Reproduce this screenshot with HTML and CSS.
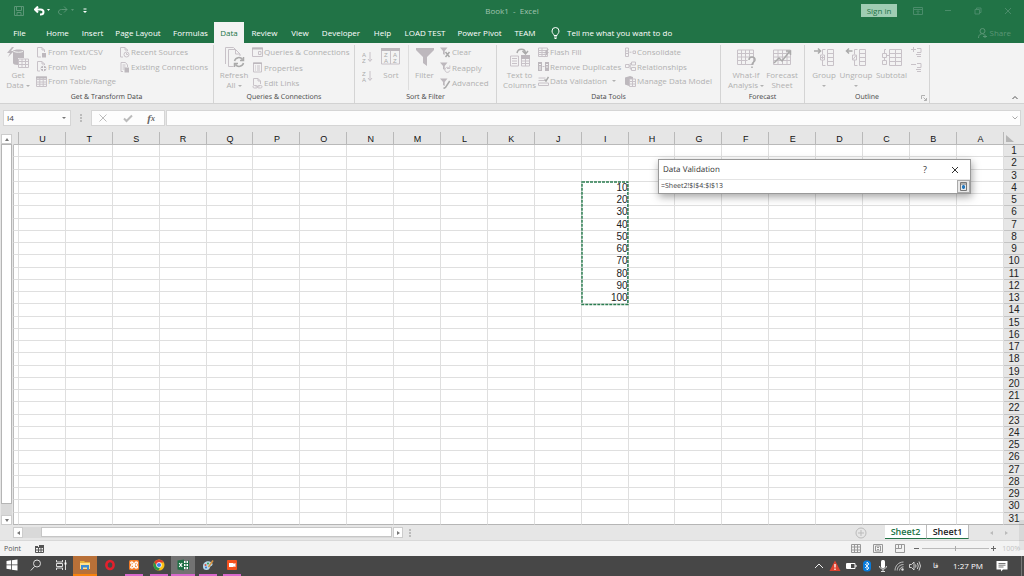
FILE: index.html
```html
<!DOCTYPE html>
<html lang="en">
<head>
<meta charset="utf-8">
<title>Book1 - Excel</title>
<link rel="stylesheet" href="styles.css">
</head>
<body>
<svg class="sprite" aria-hidden="true">
  <symbol id="i-text" viewBox="0 0 11 11"><path d="M1.500.5h4.500l2.500 2.500v2M5 10H1.500V.5M6 .5V3h2.500"/><path class="fill" d="M6 6h4v4.500H6z"/></symbol>
  <symbol id="i-web" viewBox="0 0 11 11"><path d="M1.500.5h4.500l2.500 2.500v1M4 10H1.500V.5M6 .5V3h2.500"/><circle class="fill" cx="7.500" cy="7.500" r="2.800"/><path class="cut" d="M5 7.500h5M7.500 5v5"/></symbol>
  <symbol id="i-recent" viewBox="0 0 11 11"><path d="M1.500.5h4.500l2.500 2.500v1M4 10H1.500V.5M6 .5V3h2.500"/><circle cx="7.500" cy="7.500" r="2.500"/><path d="M7.500 6v1.500h1.500"/></symbol>
  <symbol id="i-existing" viewBox="0 0 11 11"><path d="M2 .5h4.500l2 2.500v2M4 9.500H2V.5M3.500 3h3M3.500 5h3M3.500 7h2"/><path class="fill" d="M5.500 5.500h4.500v5H5.500z"/></symbol>
  <symbol id="i-table" viewBox="0 0 11 11"><path d="M.5 1h10v9.500H.5z M.5 3.500h10M.5 6h10M.5 8.200h10M3.800 2v8M7.200 2v8"/><path class="fill" d="M0 .5h11v2H0z"/></symbol>
  <symbol id="i-queries" viewBox="0 0 11 11"><path d="M.5 1h10v8.500H.5zM6.500 4.500h2.500v3H6.500z"/><path class="fill" d="M0 .5h11v2H0z"/></symbol>
  <symbol id="i-props" viewBox="0 0 11 11"><path d="M1.500 1h8v9h-8zM3 4h1M5 4h3M3 6h1M5 6h3M3 8h1M5 8h3"/><path class="fill" d="M1 .5h9v1.500H1z"/></symbol>
  <symbol id="i-links" viewBox="0 0 11 11"><path d="M1.500 7V.5h4.500L8.500 3v3M6 .5V3h2.500"/><rect x="1" y="7.500" width="4.500" height="2.500" rx="1.200"/><rect x="5.500" y="7.500" width="4.500" height="2.500" rx="1.200"/><path d="M3.500 8.800h4"/></symbol>
  <symbol id="i-fclear" viewBox="0 0 11 11"><path class="fill" d="M0 .5h7.500L4.700 4v4L3 7V4z"/><path class="heavy" d="M5.500 5l4 5M9.500 5l-4 5"/></symbol>
  <symbol id="i-freapply" viewBox="0 0 11 11"><path class="fill" d="M0 .5h7.500L4.700 4v4L3 7V4z"/><path d="M9.500 6.500a2.500 2.500 0 1 0 .3 2M9.800 3.500v3H7"/></symbol>
  <symbol id="i-fadv" viewBox="0 0 11 11"><path class="fill" d="M0 .5h7.500L4.700 4v4L3 7V4z"/><path class="heavy" d="M9.700 3L5.500 9.500l-2 1"/></symbol>
  <symbol id="i-flash" viewBox="0 0 11 11"><path d="M.5 1h9v8.500h-9zM.5 3.500h9M.5 5.500h9M.5 7.500h9M4 1v8"/><path class="fill" d="M8 3l3-1-2 3h2L6.500 10.500 8 6.500H6.500z"/></symbol>
  <symbol id="i-dup" viewBox="0 0 11 11"><path class="fill" d="M0 1h4v9H0zM7 1h4v9H7z"/><path class="cut" d="M1 3.500h2M1 6h2M1 8h2M8 3.500h2M8 6h2"/><path d="M4.500 5.500h2"/></symbol>
  <symbol id="i-valid" viewBox="0 0 11 11"><path d="M.5 2h7M.5 4.500h6M.5 7h10v2.500H.5z"/><path class="heavy" d="M6.500 3.500l1.500 1.500L10.500 1"/></symbol>
  <symbol id="i-consol" viewBox="0 0 11 11"><path d="M.5 1h3v8.500h-3zM.5 4h3M.5 6.500h3M4.500 5.200h2M8 4h2.500v2.500H8z"/></symbol>
  <symbol id="i-rel" viewBox="0 0 11 11"><path d="M.5 3.500H4v3H.5zM6.500 1H10.500v3H6.500zM6.500 6.500h4v3h-4zM4 5h1.200V2.500h1.300M5.200 5v3h1.300"/></symbol>
  <symbol id="i-model" viewBox="0 0 11 11"><path class="fill" d="M0 1.500L5 0l3 1v2H4v7L0 8.500z"/><path d="M4.500 3h6v7.500h-6zM4.500 5.500h6M4.500 8h6M7.500 3v7"/></symbol>
  <symbol id="i-get" viewBox="0 0 22 22"><path class="fill" d="M5 0L0 6h3L1 10l6-6H4l3-4zM6 4c0-2 11-2 11 0v7H11v7C8 18 6 17 6 16z"/><path class="cut" d="M7 4.500c2 1 7 1 9 0"/><path class="paper" d="M11.500 12h10v8.500h-10z"/><path d="M11.500 14.500h10M11.500 17.500h10M15 12v8M18.500 12v8"/></symbol>
  <symbol id="i-refresh" viewBox="0 0 22 22"><path d="M2.500 17V.5h8l3 3M5.500 19.500V2.500h7l4.500 4.500v2M5.500 19.500h5M12.500 2.500V7H17"/><path class="heavy" d="M11.500 14a4.500 4.500 0 0 1 8-1.500M20.500 10v3.500h-3.500M20.500 16a4.500 4.500 0 0 1-8 1.500M11.500 20v-3.500H15"/></symbol>
  <symbol id="i-az" viewBox="0 0 11 13"><text x="0" y="6">A</text><text x="0" y="12">Z</text><path d="M8 1v9M6 8l2 2.500L10 8"/></symbol>
  <symbol id="i-za" viewBox="0 0 11 13"><text x="0" y="6">Z</text><text x="0" y="12">A</text><path d="M8 1v9M6 8l2 2.500L10 8"/></symbol>
  <symbol id="i-sort" viewBox="0 0 22 22"><path d="M1.500 2h18v15h-18zM10.500 4v13"/><path class="fill" d="M1 1h19v3H1z"/><text x="4" y="10">Z</text><text x="4" y="16">A</text><text x="13" y="10">A</text><text x="13" y="16">Z</text></symbol>
  <symbol id="i-filter" viewBox="0 0 22 22"><path class="fill" d="M2 1h18v2L13 10v9l-4-3v-6L2 3z"/></symbol>
  <symbol id="i-cols" viewBox="0 0 22 22"><path d="M1.500 9h8v10h-8zM3 11.500h5M3 14h5M3 16.500h5M12.500 9h8v10h-8zM12.500 14h8M12.500 16.500h8M16.500 9v10"/><path class="fill" d="M12 8h9v4h-9z"/><path class="heavy" d="M8 6c1-5 8-5 8.500 0M13.500 4l3 3 2.500-3"/></symbol>
  <symbol id="i-whatif" viewBox="0 0 22 22"><path d="M2.500 3h16v14.500h-16zM2.500 6.500h16M2.500 10h16M2.500 13.500h10M6.500 3v14M10.500 3v14M14.500 3v7"/><path class="heavy" d="M14 13c0-4 6-4 6 0 0 2-3 2-3 5M17 19.500v1.500"/></symbol>
  <symbol id="i-forecast" viewBox="0 0 22 22"><path d="M2.500 3h17v14.500h-17zM2.500 6.500h17M2.500 10h17M2.500 13.500h17M7 3v14M11.500 3v14M16 3v14"/><path class="heavy" d="M3 16l5-5 3 3 8-10M15 4h4.500v4"/></symbol>
  <symbol id="i-group" viewBox="0 0 22 22"><path d="M14.500 2.500h6v16h-6zM14.500 6.500h6M14.500 10.500h6M14.500 14.500h6M12.500 2.500h-3v5M9.500 13v5.500h3M7.500 8h4v5h-4zM9.500 9v3M8 10.500h3"/><path class="heavy" d="M1 4h6M5 1.500L7.500 4 5 6.500"/></symbol>
  <symbol id="i-ungroup" viewBox="0 0 22 22"><path d="M14.500 2.500h6v16h-6zM14.500 6.500h6M14.500 10.500h6M14.500 14.500h6M12.500 2.500h-3v5M9.500 13v5.500h3M7.500 8h4v5h-4zM8 12.500l3-4"/><path class="heavy" d="M1.500 4h6M4 1.500L1.500 4 4 6.500"/></symbol>
  <symbol id="i-subtotal" viewBox="0 0 22 22"><path d="M8.500 2.500h12v16h-12zM8.500 6.500h12M8.500 10.500h12M8.500 14.500h12M14.500 2.500v16M5 2.500H3.500v4M1.500 6.500h4v4h-4zM1.500 13.500h4v4h-4zM3.500 10.500v3M5.500 8.500h3"/></symbol>
  <symbol id="i-show" viewBox="0 0 11 11"><path d="M2.500 0v5M0 2.500h5M6 1.500h4v4H6M5 7.500h5M6 9.500h4"/></symbol>
  <symbol id="i-hide" viewBox="0 0 11 11"><path d="M0 2.500h5M6 1.500h4v4H6M5 7.500h5M6 9.500h4"/></symbol>
</svg>

<div class="app">
  <header class="titlebar">
    <div class="quick">
      <button aria-label="Save" class="dim"><svg width="10" height="10" viewBox="0 0 10 10"><path d="M.5.5h9v9h-9zM2.500.5v4h5v-4M3 9.500v-3h4v3"/></svg></button>
      <button aria-label="Undo"><svg width="16" height="10" viewBox="0 0 16 10"><path class="bold" d="M1 3.500h5.500c4 0 4 5 0 5H6M4 .5l-3 3 3 3"/><path class="solid" d="M13 3h3l-1.500 2z"/></svg></button>
      <button aria-label="Redo" class="dim"><svg width="16" height="10" viewBox="0 0 16 10"><path d="M9 3.500H3.500c-4 0-4 5 0 5H4M6 .5l3 3-3 3"/><path class="solid" d="M13 3h3l-1.500 2z"/></svg></button>
      <button aria-label="Customize toolbar"><svg width="6" height="10" viewBox="0 0 6 10"><path class="solid" d="M1.500 2.500h3v1h-3zM1 5h4L3 7z"/></svg></button>
    </div>
    <h1>Book1 &nbsp;- &nbsp;Excel</h1>
    <div class="window-tools">
      <button class="signin">Sign in</button>
      <button aria-label="Ribbon display options"><svg width="10" height="8" viewBox="0 0 10 8"><path d="M.5.5h9v7h-9zM.5 2.500h9M5 7V4M3.500 5L5 3.500 6.500 5"/></svg></button>
      <button aria-label="Minimize"><svg width="8" height="8" viewBox="0 0 8 8"><path d="M1 3.500h6"/></svg></button>
      <button aria-label="Restore"><svg width="8" height="8" viewBox="0 0 8 8"><path d="M1 2.500h4.500V7H1zM2.500 2.500V1H7v4.500H5.500"/></svg></button>
      <button aria-label="Close"><svg width="8" height="8" viewBox="0 0 8 8"><path d="M1 1l6 6M7 1L1 7"/></svg></button>
    </div>
  </header>

  <nav class="tabs">
    <button>File</button><button>Home</button><button>Insert</button><button>Page Layout</button><button>Formulas</button><button class="active">Data</button><button>Review</button><button>View</button><button>Developer</button><button>Help</button><button>LOAD TEST</button><button>Power Pivot</button><button>TEAM</button>
    <button class="tellme"><svg width="9" height="12" viewBox="0 0 9 12"><path d="M3 8.500C3 7 1 6.500 1 4a3.500 3.500 0 0 1 7 0c0 2.500-2 3-2 4.500zM3 10h3M3.500 11.500h2"/></svg>Tell me what you want to do</button>
    <button class="share"><svg width="9" height="10" viewBox="0 0 9 10"><circle cx="4.500" cy="3" r="2.500"/><path d="M.5 10c0-5 5-5 6-3M5 8.500h4M7 6.500v4"/></svg>Share</button>
  </nav>

  <section class="ribbon" aria-label="Data">
    <div class="group g-get">
      <div class="tools">
        <button class="big"><svg><use href="#i-get"/></svg><span>Get<br>Data <i class="caret"></i></span></button>
        <div class="stack">
          <button><svg><use href="#i-text"/></svg>From Text/CSV</button>
          <button><svg><use href="#i-web"/></svg>From Web</button>
          <button><svg><use href="#i-table"/></svg>From Table/Range</button>
        </div>
        <div class="stack two">
          <button><svg><use href="#i-recent"/></svg>Recent Sources</button>
          <button><svg><use href="#i-existing"/></svg>Existing Connections</button>
        </div>
      </div>
      <h2>Get &amp; Transform Data</h2>
    </div>
    <div class="group g-queries">
      <div class="tools">
        <button class="big"><svg><use href="#i-refresh"/></svg><span>Refresh<br>All <i class="caret"></i></span></button>
        <div class="stack loose">
          <button><svg><use href="#i-queries"/></svg>Queries &amp; Connections</button>
          <button><svg><use href="#i-props"/></svg>Properties</button>
          <button><svg><use href="#i-links"/></svg>Edit Links</button>
        </div>
      </div>
      <h2>Queries &amp; Connections</h2>
    </div>
    <div class="group g-sort">
      <div class="tools">
        <div class="pair">
          <button aria-label="Sort A to Z"><svg><use href="#i-az"/></svg></button>
          <button aria-label="Sort Z to A"><svg><use href="#i-za"/></svg></button>
        </div>
        <button class="big"><svg><use href="#i-sort"/></svg><span>Sort</span></button>
        <button class="big ruled"><svg><use href="#i-filter"/></svg><span>Filter</span></button>
        <div class="stack loose">
          <button><svg><use href="#i-fclear"/></svg>Clear</button>
          <button><svg><use href="#i-freapply"/></svg>Reapply</button>
          <button><svg><use href="#i-fadv"/></svg>Advanced</button>
        </div>
      </div>
      <h2>Sort &amp; Filter</h2>
    </div>
    <div class="group g-tools">
      <div class="tools">
        <button class="big"><svg><use href="#i-cols"/></svg><span>Text to<br>Columns</span></button>
        <div class="stack">
          <button><svg><use href="#i-flash"/></svg>Flash Fill</button>
          <button><svg><use href="#i-dup"/></svg>Remove Duplicates</button>
          <button><svg><use href="#i-valid"/></svg>Data Validation <i class="caret apart"></i></button>
        </div>
        <div class="stack">
          <button><svg><use href="#i-consol"/></svg>Consolidate</button>
          <button><svg><use href="#i-rel"/></svg>Relationships</button>
          <button><svg><use href="#i-model"/></svg>Manage Data Model</button>
        </div>
      </div>
      <h2>Data Tools</h2>
    </div>
    <div class="group g-forecast">
      <div class="tools">
        <button class="big"><svg><use href="#i-whatif"/></svg><span>What-If<br>Analysis <i class="caret"></i></span></button>
        <button class="big"><svg><use href="#i-forecast"/></svg><span>Forecast<br>Sheet</span></button>
      </div>
      <h2>Forecast</h2>
    </div>
    <div class="group g-outline">
      <div class="tools">
        <button class="big"><svg><use href="#i-group"/></svg><span>Group<br><i class="caret"></i></span></button>
        <button class="big"><svg><use href="#i-ungroup"/></svg><span>Ungroup<br><i class="caret"></i></span></button>
        <button class="big"><svg><use href="#i-subtotal"/></svg><span>Subtotal</span></button>
        <div class="stack two">
          <button aria-label="Show Detail"><svg><use href="#i-show"/></svg></button>
          <button aria-label="Hide Detail"><svg><use href="#i-hide"/></svg></button>
        </div>
      </div>
      <h2>Outline</h2>
      <button class="launcher" aria-label="Outline settings"><svg width="6" height="6" viewBox="0 0 6 6"><path d="M.5 4V.5H4M2.500 2.500l3 3M5.500 3v2.500H3"/></svg></button>
    </div>
    <button class="collapse" aria-label="Collapse the ribbon"><svg width="6" height="5" viewBox="0 0 6 5"><path d="M.5 4L3 1.500 5.500 4"/></svg></button>
  </section>

  <div class="formula-bar">
    <div class="name-box"><input aria-label="Name box" value="I4"><i class="caret"></i></div>
    <span class="dots"></span>
    <div class="entry">
      <button aria-label="Cancel"><svg width="10" height="10" viewBox="0 0 10 10"><path d="M1.500 1.500l7 7M8.500 1.500l-7 7"/></svg></button>
      <button aria-label="Enter"><svg width="10" height="10" viewBox="0 0 10 10"><path class="tick" d="M1 5.500L3.500 8 9 2.500"/></svg></button>
      <button class="fx" aria-label="Insert function">f<sub>x</sub></button>
    </div>
    <div class="formula"><input aria-label="Formula"><svg width="6" height="4" viewBox="0 0 6 4"><path d="M.5.5L3 3 5.500.5"/></svg></div>
  </div>

  <main class="workbook">
    <div class="vscroll">
      <button aria-label="Scroll up"><svg width="4" height="3" viewBox="0 0 4 3"><path d="M2 0l2 3H0z"/></svg></button>
      <div class="vtrack"><div class="vthumb"></div></div>
      <button aria-label="Scroll down"><svg width="4" height="3" viewBox="0 0 4 3"><path d="M2 3L0 0h4z"/></svg></button>
    </div>
    <div class="sheet"><table class="cells"><thead></thead><tbody></tbody></table></div>
  </main>

  <div class="sheet-bar">
    <div class="hscroll">
      <button aria-label="Scroll left"><svg width="3" height="4" viewBox="0 0 3 4"><path d="M0 2l3-2v4z"/></svg></button>
      <div class="htrack"><div class="hthumb"></div></div>
      <button aria-label="Scroll right"><svg width="3" height="4" viewBox="0 0 3 4"><path d="M3 2L0 0v4z"/></svg></button>
      <span class="dots"></span>
    </div>
    <div class="sheet-tabs">
      <button class="add" aria-label="New sheet"><svg width="12" height="12" viewBox="0 0 12 12"><circle cx="6" cy="6" r="5"/><path d="M3 6h6M6 3v6"/></svg></button>
      <button class="tab current">Sheet2</button><button class="tab">Sheet1</button>
      <button class="step" aria-label="Previous sheet"><svg width="3" height="4" viewBox="0 0 3 4"><path d="M0 2l3-2v4z"/></svg></button>
      <button class="step" aria-label="Next sheet"><svg width="3" height="4" viewBox="0 0 3 4"><path d="M3 2L0 0v4z"/></svg></button>
    </div>
    <span class="edge-shade"></span>
  </div>

  <footer class="status">
    <span>Point</span>
    <button aria-label="Record macro"><svg width="9" height="8" viewBox="0 0 9 8"><path d="M.5 2.500h8v5h-8zM.5 5h8M3.500 3v4M6 3v4"/><path class="solid" d="M4 0h5v3H4zM0 1h3v2H0z"/></svg></button>
    <div class="views">
      <button aria-label="Normal"><svg width="10" height="9" viewBox="0 0 10 9"><path d="M.5.5h9v8h-9zM.5 3h9M.5 6h9M3.500.5v8M6.500.5v8"/></svg></button>
      <button aria-label="Page Layout view"><svg width="10" height="9" viewBox="0 0 10 9"><path d="M.5.5h9v8h-9zM2.500 2h5v5h-5zM4 3.500h2M4 5.500h2"/></svg></button>
      <button aria-label="Page Break Preview"><svg width="10" height="9" viewBox="0 0 10 9"><path d="M.5.5h9v8h-9zM3.500.5v4M6.500.5v4H.5"/></svg></button>
    </div>
    <div class="zoom">
      <button aria-label="Zoom out"><svg width="6" height="6" viewBox="0 0 6 6"><path d="M0 2.500h5"/></svg></button>
      <input type="range" aria-label="Zoom" min="10" max="190" value="100">
      <button aria-label="Zoom in"><svg width="6" height="6" viewBox="0 0 6 6"><path d="M0 2.500h5M2.500 0v5"/></svg></button>
      <span>100%</span>
    </div>
  </footer>

  <div class="taskbar">
    <div class="launch">
      <button aria-label="Start"><svg width="12" height="12" viewBox="0 0 12 12"><path fill="#fff" d="M.5 2L5 1.300v4.200H.5zM5.800 1.200L11.500.4v5.100H5.800zM.5 6.300H5v4.200l-4.500-.7zM5.800 6.300h5.700v5.200l-5.700-.8z"/></svg></button>
      <button aria-label="Search"><svg width="12" height="12" viewBox="0 0 12 12"><g fill="none" stroke="#ddd"><circle cx="7" cy="4.500" r="3.500"/><path d="M4.500 7.500L.8 11.500"/></g></svg></button>
      <button aria-label="Task View"><svg width="12" height="12" viewBox="0 0 12 12"><path fill="none" stroke="#ddd" d="M1.500 1v2h6V1M1.500 4.500h6v3h-6zM1.500 11V9h6v2M10.500 1v10"/><path fill="#fff" d="M9.500 3.500h2v2h-2z"/></svg></button>
      <button class="alert" aria-label="File Explorer"><svg width="12" height="12" viewBox="0 0 12 12"><path fill="#e8b33c" d="M1 2h4l1 1h5v7H1z"/><path fill="#ffe08a" d="M1 4h10v6H1z"/><path fill="#3d8bd0" d="M2 6h8v5H8V8.500H4V11H2z"/></svg></button>
      <button aria-label="Opera"><svg width="12" height="12" viewBox="0 0 12 12"><ellipse cx="6" cy="6" rx="3.600" ry="4" fill="none" stroke="#e3202c" stroke-width="2.600"/></svg></button>
      <button class="open" aria-label="XAMPP"><svg width="12" height="12" viewBox="0 0 12 12"><rect x="1" y="1" width="10" height="10" rx="1.500" fill="#f47b26"/><path fill="none" stroke="#fff" stroke-width="1.300" d="M4 3C1.500 3 3 5 4.500 6 3 7 1.500 9 4 9s2-6 4-6 1.500 2 0 3c1.500 1 2.500 3 0 3S6 3 4 3"/></svg></button>
      <button class="open" aria-label="Chrome"><svg width="12" height="12" viewBox="0 0 12 12"><circle cx="6" cy="6" r="5.500" fill="#fbc116"/><path fill="#e33b2e" d="M1.200 3.300A5.500 5.500 0 0 1 10.800 3.500H6L3.500 7z"/><path fill="#279847" d="M1.200 3.300L4 7.500 7 8.500 5.500 11.500A5.500 5.500 0 0 1 1.200 3.300z"/><circle cx="6" cy="6" r="2.700" fill="#fff"/><circle cx="6" cy="6" r="2.100" fill="#3b7ded"/></svg></button>
      <button class="open focused" aria-label="Excel"><svg width="12" height="12" viewBox="0 0 12 12"><path fill="#fff" d="M6 2h5.500v8H6z"/><path fill="none" stroke="#1d7044" d="M6 4.500h5M6 7.500h5M9 2v8M11.500 1.500v9"/><path fill="#1d7044" d="M.5 1.500L7 .5v11L.5 10.500z"/><path stroke="#fff" stroke-width="1.200" d="M2.200 4l3 4M5.200 4l-3 4"/></svg></button>
      <button class="open" aria-label="Paint"><svg width="12" height="12" viewBox="0 0 12 12"><path fill="#b6d7e8" d="M1 7c0-4 5-6 8-4s1 4 0 4-1 4-4 4-4-1-4-4z"/><circle cx="3.500" cy="6" r="1" fill="#d94b3d"/><circle cx="6" cy="4.500" r="1" fill="#3a9b51"/><circle cx="4" cy="8.500" r="1" fill="#3a70cb"/><path stroke="#d89340" stroke-width="1.500" d="M6.500 8L11 1.500"/></svg></button>
      <button class="open" aria-label="Screen recorder"><svg width="12" height="12" viewBox="0 0 12 12"><rect x="1" y="1" width="10" height="10" rx="1" fill="#f4511e"/><path fill="#fff" d="M3 4h4.500v1L9.500 4v4L7.500 7.200V8H3z"/></svg></button>
    </div>
    <div class="tray">
      <button aria-label="Hidden icons"><svg width="12" height="12" viewBox="0 0 12 12"><path fill="none" stroke="#eee" d="M2 8l4-4 4 4"/></svg></button>
      <button aria-label="Warning"><svg width="12" height="12" viewBox="0 0 12 12"><path fill="#dc4230" d="M6 .5L11.500 11H.5z"/><path stroke="#fff" stroke-width="1.300" d="M6 4v3.500M6 8.500V10"/></svg></button>
      <button aria-label="Battery"><svg width="12" height="12" viewBox="0 0 12 12"><path fill="none" stroke="#fff" d="M1.500 3.500h8.500v5H1.500zM11 5v2"/><path fill="#fff" d="M2 4h4v4H2z"/></svg></button>
      <button aria-label="Bluetooth"><svg width="12" height="12" viewBox="0 0 12 12"><rect x="2" y=".5" width="8" height="11" rx="3.500" fill="#087cdd"/><path fill="none" stroke="#fff" stroke-width=".8" d="M4 4l4 4-2 2V2l2 2-4 4"/></svg></button>
      <button aria-label="Microphone"><svg width="12" height="12" viewBox="0 0 12 12"><rect x="4" y="0" width="4" height="8" rx="1.500" fill="#fff"/><path fill="none" stroke="#ddd" d="M2.500 6c0 4 7 4 7 0M6 9v2.500M4 11.500h4"/></svg></button>
      <button aria-label="Network"><svg width="12" height="12" viewBox="0 0 12 12"><path fill="none" stroke="#ccc" stroke-width=".9" d="M2 10.500C2 6 5.500 2 10.500 2M4.200 10.500c0-3.500 2.800-6 6.300-6M6.500 10.500c0-2 1.800-3.700 4-3.700"/><circle cx="9.500" cy="9.500" r="1.200" fill="#ddd"/></svg></button>
      <button aria-label="Volume"><svg width="12" height="12" viewBox="0 0 12 12"><path fill="none" stroke="#ddd" stroke-width=".9" d="M.5 4.500h2L5 2v8L2.500 7.500h-2zM6.500 4.500q1 1.500 0 3M8.300 3q2 3 0 6M10 1.500q3 4.500 0 9"/></svg></button>
      <span class="lang" lang="fa">فا</span>
      <time>1:27 PM</time>
      <button aria-label="Notifications"><svg width="12" height="12" viewBox="0 0 12 12"><path fill="#fff" d="M.5 1h11v8.500H7L5 11.500v-2H.5z"/><path stroke="#555" stroke-width=".8" d="M2.500 3.500h7M2.500 5.200h7M2.500 7h5"/></svg></button>
    </div>
  </div>
</div>

<div class="dialog" role="dialog" aria-labelledby="dv-title">
  <div class="dialog-head">
    <h2 id="dv-title">Data Validation</h2>
    <button class="help" aria-label="Help">?</button>
    <button aria-label="Close"><svg width="8" height="8" viewBox="0 0 8 8"><path d="M1 1l6 6M7 1L1 7"/></svg></button>
  </div>
  <div class="dialog-row">
    <input aria-labelledby="dv-title" value="=Sheet2!$I$4:$I$13">
    <button aria-label="Expand dialog"><svg width="7" height="9" viewBox="0 0 7 9"><path class="frame" d="M.5.5h6v8h-6zM.5 2h6"/><path class="arrow" d="M3.500 3v4M2 5h3"/></svg></button>
  </div>
</div>
<script src="grid.js"></script>
</body>
</html>
```
FILE: styles.css
```css
* { box-sizing: border-box; }
body { margin: 0; font: 8px/10px "Open Sans", "Noto Sans", sans-serif; color: #444; }
button, input { font: inherit; color: inherit; border: 0; padding: 0; margin: 0; background: none; outline: 0; }
button { display: flex; align-items: center; white-space: nowrap; }
h1, h2 { margin: 0; font-weight: 400; }
svg { display: block; flex: none; fill: none; stroke: currentColor; }
.sprite { display: none; }
.caret { display: inline-block; border: 2px solid transparent; border-top-color: currentColor; border-bottom: 0; vertical-align: middle; }
.dots { width: 2px; height: 8px; background: repeating-linear-gradient(#bbb 0 2px, transparent 2px 3px); }
.app { display: flex; flex-direction: column; height: 100vh; background: #e6e6e6; overflow: hidden; }

.titlebar { display: grid; grid-template-columns: 1fr auto 1fr; align-items: center; height: 21px; background: #217346; }
.titlebar h1 { font-size: 8px; color: #a0c4b0; }
.quick { display: flex; gap: 8px; padding-left: 14px; color: #fff; }
.quick button:first-child { margin-right: 2px; }
.quick .dim { color: #5b9676; }
.quick .solid, .status .solid { fill: currentColor; stroke: none; }
.bold { stroke-width: 2; }
.window-tools { display: flex; justify-content: flex-end; align-items: center; padding-right: 1px; color: #4a8c6a; }
.window-tools button { width: 30px; height: 13px; justify-content: center; }
.window-tools .signin { width: 36px; margin-right: 6px; background: #9fcdb3; color: #217346; }

.tabs { display: grid; grid-template-columns: 39px 37px 33px 58px 47px 30px 41px 30px 52px 31px 54px 55px 36px auto 1fr; height: 22px; padding-top: 1px; background: #217346; color: #fff; }
.tabs button { justify-content: center; }
.tabs .active { background: #f3f3f3; color: #217346; }
.tabs .tellme { gap: 7px; padding-left: 8px; }
.tabs .share { justify-content: flex-end; gap: 3px; padding-right: 13px; color: #5b9676; }

.ribbon { display: flex; flex: none; height: 61px; padding-top: 2px; background: #f3f3f3; border-bottom: 1px solid #d2d2d2; color: #b1b1b1; text-rendering: geometricPrecision; }
.group { position: relative; display: flex; flex-direction: column; justify-content: space-between; border-right: 1px solid #d4d4d4; }
.group h2 { font-size: 7px; line-height: 10px; text-align: center; color: #444; }
.tools { display: grid; height: 45px; }
.g-get { width: 214px; } .g-get .tools { grid-template-columns: 36px 83px 1fr; }
.g-queries { width: 141px; } .g-queries .tools { grid-template-columns: 36px 1fr; padding-left: 2px; }
.g-sort { width: 142px; } .g-sort .tools { grid-template-columns: 12px 34px 32px 1fr; padding-left: 7px; }
.g-tools { width: 224px; } .g-tools .tools { grid-template-columns: 37px 87px 1fr; padding-left: 4px; }
.g-forecast { width: 84px; } .g-forecast .tools { grid-template-columns: 36px 36px; padding-left: 7px; }
.g-outline { width: 125px; } .g-outline .tools { grid-template-columns: 32px 32px 39px 1fr; padding-left: 3px; }
.tools button svg { width: 11px; height: 11px; stroke: #c8c2c8; stroke-width: 1; }
.fill { fill: #bdb8bd; stroke: none; }
.cut { stroke: #f3f3f3; }
.paper { fill: #f3f3f3; }
.heavy { stroke: #aaa; stroke-width: 1.500; }
.sprite text { font: 6px "Liberation Sans", sans-serif; fill: #aaa; stroke: none; }
.big { flex-direction: column; text-align: center; }
.tools .big svg { width: 22px; height: 22px; margin: 2px 0 1px; }
.ruled { border-left: 1px solid #ddd; }
.stack { display: flex; flex-direction: column; justify-content: space-between; height: 43px; }
.stack.loose { height: 45px; }
.stack.two { height: 29px; }
.stack button { gap: 1px; height: 14px; }
.stack .apart { margin-left: 4px; }
.pair { display: flex; flex-direction: column; gap: 6px; padding-top: 6px; }
.tools .pair svg { height: 13px; }
.launcher { position: absolute; right: 2px; bottom: 2px; }
.collapse { align-self: flex-end; margin: 0 6px 3px auto; color: #555; }

.formula-bar { display: flex; align-items: center; flex: none; height: 28px; padding: 0 3px; }
.name-box, .entry, .formula { display: flex; align-items: center; height: 16px; background: #fdfdfd; border: 1px solid #d5d5d5; }
.name-box { width: 68px; padding: 0 4px 0 3px; color: #777; }
.name-box input { flex: 1; min-width: 0; color: #444; }
.formula-bar .dots { margin: 0 9px; }
.entry { width: 74px; padding: 0 9px 0 6px; justify-content: space-between; color: #bbb; }
.tick { stroke-width: 2; }
.fx { font: italic bold 11px "Liberation Serif", serif; color: #666; }
.fx sub { font-size: 8px; }
.formula { flex: 1; margin-left: 1px; padding-right: 2px; color: #aaa; }
.formula input { flex: 1; }

.workbook { display: flex; flex: 1; min-height: 0; }
.vscroll { display: flex; flex-direction: column; width: 13px; padding: 2px 1px 0; }
.vscroll button, .hscroll button { flex: none; justify-content: center; background: #fff; border: 1px solid #ccc; color: #777; }
.vscroll button { height: 10px; }
.vscroll svg, .hscroll svg, .step svg { fill: currentColor; stroke: none; }
.vtrack { flex: 1; background: #d9d9d9; }
.vthumb { height: 97%; background: #fff; border: 1px solid #b5b5b5; }
.sheet { flex: 1; min-width: 0; }
.cells { width: 100%; height: 100%; table-layout: fixed; border-spacing: 0; background: #fff; font: 10px/10px "Liberation Sans", Arial, sans-serif; color: #222; }
.cells th, .cells td { padding: 1px 0 0; border: solid #dfdfdf; border-width: 0 1px 1px 0; }
.cells tr > :first-child { width: 6px; border-left: 1px solid #bbb; }
.cells tr > :last-child { width: 20px; }
.cells thead th { height: 13px; padding: 1px 0 0 1px; background: #e6e6e6; border-color: #b9b9b9; font-size: 9px; font-weight: 400; color: #111; }
.cells thead tr > :first-child { border-left-color: #e6e6e6; }
.cells thead tr > :last-child { border-right: 0; }
.cells tbody th { background: #e6e6e6; border-color: #c4c4c4; border-right: 0; font-weight: 400; text-align: center; }
.cells td { text-align: right; }
.cells tbody tr:last-child > * { border-bottom-color: #b5b5b5; }
.cells .origin { position: relative; }
.range { position: absolute; left: 0; top: 0; width: 100%; height: calc(1000% + 10px); overflow: visible; stroke: #2b7d50; stroke-width: 1.500; stroke-dasharray: 3 1; }
.corner { width: 8px; height: 8px; margin-left: 1px; fill: #b5b5b5; stroke: none; }

.sheet-bar { position: relative; display: flex; justify-content: space-between; flex: none; height: 16px; border-bottom: 1px solid #d8d8d8; }
.hscroll { display: flex; align-items: center; width: 411px; padding-left: 13px; }
.hscroll button { width: 10px; height: 11px; }
.htrack { flex: 1; height: 11px; margin-right: 1px; padding-left: 18px; background: #d9d9d9; }
.hthumb { height: 10px; background: #fff; border: 1px solid #c6c6c6; }
.hscroll .dots { margin-left: 6px; }
.sheet-tabs { display: flex; padding-right: 15px; color: #bbb; }
.add { margin-right: 18px; }
.tab { width: 42px; height: 14px; justify-content: center; background: #fff; border-bottom: 1px solid #217346; border-right: 1px solid #bbb; font-size: 9px; font-weight: 600; color: #222; }
.tab.current { color: #217346; }
.step { width: 4px; margin-left: 11px; }
.tab + .step { margin-left: 21px; }
.edge-shade { position: absolute; right: 0; top: -5px; width: 5px; height: 30px; background: rgba(0, 0, 0, .06); }

.status { display: flex; align-items: center; flex: none; height: 15px; padding: 0 4px; background: #f3f3f3; font-size: 7px; color: #555; }
.status > button { margin-left: 14px; }
.views { display: flex; gap: 12px; margin-left: auto; color: #999; }
.zoom { display: flex; align-items: center; margin-left: 9px; color: #666; }
.zoom input { appearance: none; width: 67px; height: 7px; margin: 0 2px; background: linear-gradient(#bbb, #bbb) center / 100% 1px no-repeat; }
.zoom input::-webkit-slider-thumb { appearance: none; width: 1px; height: 5px; background: #aaa; }
.zoom span { margin-left: 5px; color: #c4c4c4; }

.taskbar { display: flex; justify-content: space-between; flex: none; height: 20px; background: #474747; color: #fff; }
.taskbar svg { stroke: none; }
.launch, .tray { display: flex; }
.launch button { width: 25px; justify-content: center; border-bottom: 2px solid transparent; }
.launch button:nth-child(even) { width: 24px; }
.launch button:first-child { width: 24px; }
.launch .alert { background: #b87038; border-color: #f7820c; }
.launch .open { background: linear-gradient(#d968cd, #d968cd) bottom / 18px 2px no-repeat border-box; }
.launch .focused { background: linear-gradient(#d968cd, #d968cd) bottom / 100% 2px no-repeat border-box #727272; }
.tray { align-items: center; padding-right: 6px; border-right: 1px solid #777; margin-right: 2px; }
.tray button { width: 16px; justify-content: center; }
.lang { width: 24px; text-align: center; font-size: 7px; }
.tray time { width: 42px; text-align: center; }
.tray button:last-child { width: 26px; }

.dialog { position: absolute; left: 658px; top: 159px; width: 313px; background: #fff; border: 1px solid #999; box-shadow: 1px 3px 8px rgba(0, 0, 0, .35); }
.dialog-head { display: flex; align-items: center; height: 20px; padding: 0 11px 0 4px; border-bottom: 1px solid #e4e4e4; color: #333; text-rendering: geometricPrecision; }
.dialog-head h2 { flex: 1; font-size: 8px; }
.help { font-size: 9px; }
.dialog-head button:last-child { margin-left: 24px; }
.dialog-row { display: flex; height: 13px; }
.dialog-row input { flex: 1; min-width: 0; padding-left: 2px; font-size: 7px; text-rendering: geometricPrecision; }
.dialog-row button { width: 13px; justify-content: center; background: #e8e8e8; border: 1px solid #aaa; }
.frame { stroke: #777; }
.arrow { stroke: #2478be; stroke-width: 2; }
```
FILE: grid.js
```js
const columns = "UTSRQPONMLKJIHGFEDCBA".split("");
const firstRow = 4;
const values = [10, 20, 30, 40, 50, 60, 70, 80, 90, 100];
const rowCount = 31;

document.querySelector(".cells thead").innerHTML =
  "<tr><th></th>" + columns.map((c) => `<th scope="col">${c}</th>`).join("") +
  '<th><svg class="corner" viewBox="0 0 8 8"><path d="M0 0v7h8z"/></svg></th></tr>';

let rows = "";
for (let r = 1; r <= rowCount; r++) {
  rows += "<tr><td></td>";
  for (const c of columns) {
    const value = c === "I" ? values[r - firstRow] ?? "" : "";
    rows += c === "I" && r === firstRow
      ? `<td class="origin">${value}<svg class="range"><rect width="100%" height="100%"/></svg></td>`
      : `<td>${value}</td>`;
  }
  rows += `<th scope="row">${r}</th></tr>`;
}
document.querySelector(".cells tbody").innerHTML = rows;
```
